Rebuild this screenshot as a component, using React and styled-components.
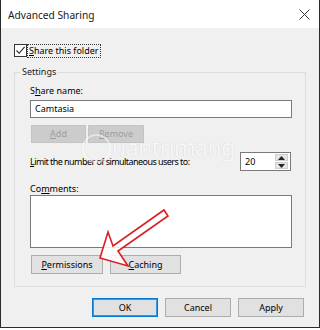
import React from "react";
import styled, { createGlobalStyle } from "styled-components";

const GlobalStyle = createGlobalStyle`
  html, body { margin: 0; padding: 0; background: #ffffff; }
  body {
    font-family: "Noto Sans", "Open Sans", sans-serif;
    font-size: 9px;
    color: #000000;
  }
  * { box-sizing: border-box; }
`;

const Window = styled.div`
  position: relative;
  width: 320px;
  height: 328px;
  border: 1px solid #2b2b2b;
  border-top: none;
  background: #f0f0f0;
  display: flex;
  flex-direction: column;
  overflow: hidden;
`;

const TitleBar = styled.div`
  height: 28px;
  flex: none;
  background: #ffffff;
  display: flex;
  align-items: center;
  justify-content: space-between;
  padding: 0 9px 0 7px;
`;

const Title = styled.span`
  font-size: 10.2px;
  color: #1a1a1a;
  margin-top: 1px;
`;

const Body = styled.div`
  padding: 16px 13px 0 13px;
  display: flex;
  flex-direction: column;
`;

const CheckRow = styled.div`
  display: flex;
  align-items: center;
  gap: 1px;
  height: 13px;
`;

const Box = styled.span`
  width: 13px;
  height: 13px;
  border: 1px solid #333333;
  background: #ffffff;
  display: flex;
  align-items: center;
  justify-content: center;
`;

const FocusLabel = styled.span`
  outline: 1px dotted #333333;
  outline-offset: 0;
  padding: 0 1px;
  line-height: 12px;
`;

const Key = styled.u`
  text-underline-offset: 1px;
`;

const Group = styled.fieldset`
  margin: 9px 0 0 0;
  padding: 0;
  border: 1px solid #dcdcdc;
  min-width: 0;
`;

const Legend = styled.legend`
  margin-left: 5px;
  padding: 0 2px;
  line-height: 12px;
  color: #1a1a1a;
`;

const GroupInner = styled.div`
  padding: 7px 13px 12px 15px;
  display: flex;
  flex-direction: column;
`;

const Label = styled.div`
  line-height: 12px;
  margin-top: ${(p) => p.$top || 0}px;
  margin-bottom: ${(p) => p.$bottom || 0}px;
`;

const Field = styled.div`
  height: ${(p) => p.$h}px;
  border: 1px solid #7a7a7a;
  background: #ffffff;
  padding: 2px 4px;
  line-height: 12px;
`;

const ButtonRow = styled.div`
  display: flex;
  gap: ${(p) => p.$gap}px;
  margin-top: ${(p) => p.$top}px;
  padding-left: ${(p) => p.$left || 0}px;
  justify-content: ${(p) => (p.$end ? "flex-end" : "flex-start")};
  padding-right: ${(p) => p.$right || 0}px;
`;

const Button = styled.div`
  width: ${(p) => p.$w}px;
  height: ${(p) => p.$h || 19}px;
  display: flex;
  align-items: center;
  justify-content: center;
  background: ${(p) => (p.$disabled ? "#cccccc" : "#e1e1e1")};
  border: 1px solid ${(p) => (p.$disabled ? "#c4c4c4" : p.$primary ? "#0078d7" : "#adadad")};
  box-shadow: ${(p) => (p.$primary ? "inset 0 0 0 1px #3c96e0" : "none")};
  color: ${(p) => (p.$disabled ? "#9d9d9d" : "#000000")};
  line-height: 12px;
`;

const LimitRow = styled.div`
  display: flex;
  align-items: center;
  justify-content: space-between;
  margin-top: 9px;
  padding-right: 1px;
`;

const LimitText = styled.span`
  letter-spacing: -0.55px;
`;

const Spin = styled.div`
  width: 51px;
  height: 19px;
  border: 1px solid #7a7a7a;
  background: #ffffff;
  display: flex;
  align-items: center;
  padding: 1px 2px 1px 4px;
`;

const SpinValue = styled.span`
  flex: 1;
  line-height: 12px;
`;

const SpinArrows = styled.div`
  width: 13px;
  height: 15px;
  display: flex;
  flex-direction: column;
  gap: 1px;
`;

const SpinBtn = styled.div`
  flex: 1;
  background: #e5e5e5;
  border: 1px solid #cfcfcf;
  display: flex;
  align-items: center;
  justify-content: center;
`;

const Watermark = styled.div`
  position: absolute;
  left: 81px;
  top: 134px;
  display: flex;
  align-items: center;
  gap: 1px;
  pointer-events: none;
  opacity: 0.5;
`;

const MarkCircle = styled.div`
  width: 29px;
  height: 29px;
  border-radius: 50%;
  border: 2px solid #ffffff;
  box-shadow: 0 0 1px rgba(0, 0, 0, 0.25), inset 0 0 1px rgba(0, 0, 0, 0.25);
`;

const MarkText = styled.span`
  font-family: "Noto Sans", sans-serif;
  font-size: 23px;
  letter-spacing: -0.5px;
  color: #ffffff;
  text-shadow: 0 0 1px rgba(0, 0, 0, 0.35);
  margin-top: -4px;
`;

const Overlay = styled.svg`
  position: absolute;
  left: -1px;
  top: 0;
  pointer-events: none;
`;

const Check = () => (
  <svg width="11" height="11" viewBox="0 0 11 11">
    <path d="M1.5 5.5 L4.2 8.3 L9.6 1.8" fill="none" stroke="#222" strokeWidth="1.1" />
  </svg>
);

const Close = () => (
  <svg width="11" height="11" viewBox="0 0 11 11">
    <path d="M0.5 0.5 L10.5 10.5 M10.5 0.5 L0.5 10.5" stroke="#333" strokeWidth="1" />
  </svg>
);

const Tri = ({ up }) => (
  <svg width="7" height="4" viewBox="0 0 7 4">
    <path d={up ? "M0 4 L3.5 0 L7 4 Z" : "M0 0 L3.5 4 L7 0 Z"} fill="#222" />
  </svg>
);

export default function App() {
  return (
    <>
      <GlobalStyle />
      <Window>
        <TitleBar>
          <Title>Advanced Sharing</Title>
          <Close />
        </TitleBar>
        <Body>
          <CheckRow>
            <Box>
              <Check />
            </Box>
            <FocusLabel>
              <Key>S</Key>hare this folder
            </FocusLabel>
          </CheckRow>
          <Group>
            <Legend>Settings</Legend>
            <GroupInner>
              <Label $bottom={3}>
                S<Key>h</Key>are name:
              </Label>
              <Field $h={18}>Camtasia</Field>
              <ButtonRow $gap={2} $top={7} $left={1}>
                <Button $w={55} $h={18} $disabled>
                  <Key>A</Key>dd
                </Button>
                <Button $w={56} $h={18} $disabled>
                  <Key>R</Key>emove
                </Button>
              </ButtonRow>
              <LimitRow>
                <LimitText>
                  <Key>L</Key>imit the number of simultaneous users to:
                </LimitText>
                <Spin>
                  <SpinValue>20</SpinValue>
                  <SpinArrows>
                    <SpinBtn>
                      <Tri up />
                    </SpinBtn>
                    <SpinBtn>
                      <Tri />
                    </SpinBtn>
                  </SpinArrows>
                </Spin>
              </LimitRow>
              <Label $top={12}>
                Co<Key>m</Key>ments:
              </Label>
              <Field $h={53} />
              <ButtonRow $gap={7} $top={7} $left={1}>
                <Button $w={72}>
                  <Key>P</Key>ermissions
                </Button>
                <Button $w={71}>
                  <Key>C</Key>aching
                </Button>
              </ButtonRow>
            </GroupInner>
          </Group>
          <ButtonRow $gap={7} $top={11} $end $right={2}>
            <Button $w={66} $primary>OK</Button>
            <Button $w={66}>Cancel</Button>
            <Button $w={66}>Apply</Button>
          </ButtonRow>
        </Body>
        <Watermark>
          <MarkCircle />
          <MarkText>uantrimang</MarkText>
        </Watermark>
        <Overlay width="320" height="330" viewBox="0 0 320 330">
          <path
            d="M100 258 L108 232 L113 246 L164 210 L168 216 L118 251 L128 266 Z"
            fill="rgba(255,255,255,0.85)"
            stroke="#d91f1f"
            strokeWidth="1.6"
            strokeLinejoin="miter"
          />
        </Overlay>
      </Window>
    </>
  );
}
